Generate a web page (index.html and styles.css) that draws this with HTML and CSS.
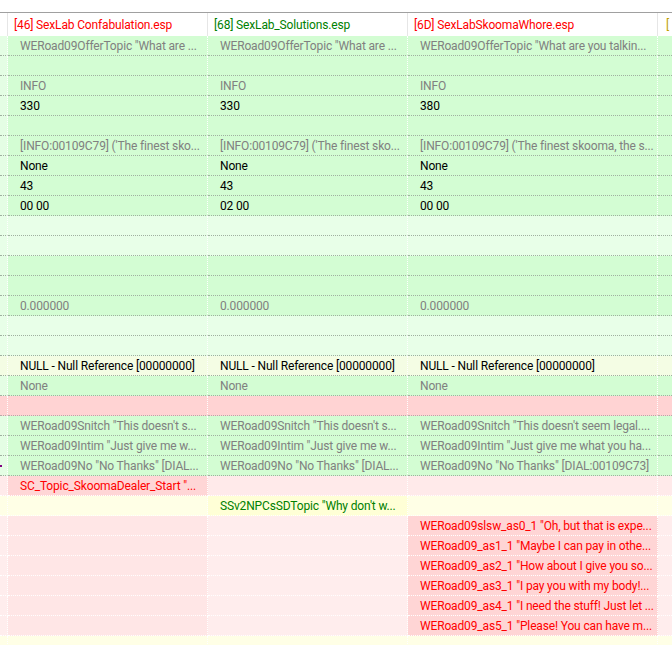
FILE: index.html
```html
<!DOCTYPE html>
<html>
  <head>
    <title>Record Compare</title>
    <link rel="stylesheet" href="styles.css">
  </head>
  <body>
    <div class="view">
      <div class="head">
        <div class="cell strip"></div>
        <div class="cell red">[46] SexLab Confabulation.esp</div>
        <div class="cell green">[68] SexLab_Solutions.esp</div>
        <div class="cell red">[6D] SexLabSkoomaWhore.esp</div>
        <div class="cell olive">[</div>
      </div>

      <div class="row g">
        <div class="cell strip"></div>
        <div class="cell dim">WERoad09OfferTopic "What are ...</div>
        <div class="cell dim">WERoad09OfferTopic "What are ...</div>
        <div class="cell dim">WERoad09OfferTopic "What are you talkin...</div>
        <div class="cell"></div>
      </div>
      <div class="row g">
        <div class="cell strip"></div><div class="cell"></div><div class="cell"></div><div class="cell"></div><div class="cell"></div>
      </div>
      <div class="row g">
        <div class="cell strip"></div>
        <div class="cell dim">INFO</div>
        <div class="cell dim">INFO</div>
        <div class="cell dim">INFO</div>
        <div class="cell"></div>
      </div>
      <div class="row g">
        <div class="cell strip"></div>
        <div class="cell">330</div>
        <div class="cell">330</div>
        <div class="cell">380</div>
        <div class="cell"></div>
      </div>
      <div class="row g">
        <div class="cell strip"></div><div class="cell"></div><div class="cell"></div><div class="cell"></div><div class="cell"></div>
      </div>
      <div class="row g">
        <div class="cell strip"></div>
        <div class="cell dim">[INFO:00109C79] ('The finest sko...</div>
        <div class="cell dim">[INFO:00109C79] ('The finest sko...</div>
        <div class="cell dim">[INFO:00109C79] ('The finest skooma, the s...</div>
        <div class="cell"></div>
      </div>
      <div class="row g">
        <div class="cell strip"></div>
        <div class="cell">None</div>
        <div class="cell">None</div>
        <div class="cell">None</div>
        <div class="cell"></div>
      </div>
      <div class="row g">
        <div class="cell strip"></div>
        <div class="cell">43</div>
        <div class="cell">43</div>
        <div class="cell">43</div>
        <div class="cell"></div>
      </div>
      <div class="row g">
        <div class="cell strip"></div>
        <div class="cell">00 00</div>
        <div class="cell">02 00</div>
        <div class="cell">00 00</div>
        <div class="cell"></div>
      </div>
      <div class="row lg">
        <div class="cell strip"></div><div class="cell"></div><div class="cell"></div><div class="cell"></div><div class="cell"></div>
      </div>
      <div class="row lg">
        <div class="cell strip"></div><div class="cell"></div><div class="cell"></div><div class="cell"></div><div class="cell"></div>
      </div>
      <div class="row g">
        <div class="cell strip"></div><div class="cell"></div><div class="cell"></div><div class="cell"></div><div class="cell"></div>
      </div>
      <div class="row g">
        <div class="cell strip"></div><div class="cell"></div><div class="cell"></div><div class="cell"></div><div class="cell"></div>
      </div>
      <div class="row g">
        <div class="cell strip"></div>
        <div class="cell dim">0.000000</div>
        <div class="cell dim">0.000000</div>
        <div class="cell dim">0.000000</div>
        <div class="cell"></div>
      </div>
      <div class="row lg">
        <div class="cell strip"></div><div class="cell"></div><div class="cell"></div><div class="cell"></div><div class="cell"></div>
      </div>
      <div class="row lg">
        <div class="cell strip"></div><div class="cell"></div><div class="cell"></div><div class="cell"></div><div class="cell"></div>
      </div>
      <div class="row ly">
        <div class="cell strip"></div>
        <div class="cell">NULL - Null Reference [00000000]</div>
        <div class="cell">NULL - Null Reference [00000000]</div>
        <div class="cell">NULL - Null Reference [00000000]</div>
        <div class="cell"></div>
      </div>
      <div class="row g">
        <div class="cell strip"></div>
        <div class="cell dim">None</div>
        <div class="cell dim">None</div>
        <div class="cell dim">None</div>
        <div class="cell"></div>
      </div>
      <div class="row p">
        <div class="cell strip"></div><div class="cell"></div><div class="cell"></div><div class="cell"></div><div class="cell"></div>
      </div>
      <div class="row g">
        <div class="cell strip"></div>
        <div class="cell dim">WERoad09Snitch "This doesn't s...</div>
        <div class="cell dim">WERoad09Snitch "This doesn't s...</div>
        <div class="cell dim">WERoad09Snitch "This doesn't seem legal....</div>
        <div class="cell"></div>
      </div>
      <div class="row g">
        <div class="cell strip"></div>
        <div class="cell dim">WERoad09Intim "Just give me w...</div>
        <div class="cell dim">WERoad09Intim "Just give me w...</div>
        <div class="cell dim">WERoad09Intim "Just give me what you ha...</div>
        <div class="cell"></div>
      </div>
      <div class="row g">
        <div class="cell strip"><span class="mark"></span></div>
        <div class="cell dim">WERoad09No "No Thanks" [DIAL...</div>
        <div class="cell dim">WERoad09No "No Thanks" [DIAL...</div>
        <div class="cell dim">WERoad09No "No Thanks" [DIAL:00109C73]</div>
        <div class="cell"></div>
      </div>
      <div class="row lp">
        <div class="cell strip"></div>
        <div class="cell red hot">SC_Topic_SkoomaDealer_Start "...</div>
        <div class="cell"></div>
        <div class="cell"></div>
        <div class="cell"></div>
      </div>
      <div class="row ly2">
        <div class="cell strip"></div>
        <div class="cell"></div>
        <div class="cell green mid">SSv2NPCsSDTopic "Why don't w...</div>
        <div class="cell"></div>
        <div class="cell"></div>
      </div>
      <div class="row pk">
        <div class="cell strip"></div><div class="cell a"></div><div class="cell"></div>
        <div class="cell red hot">WERoad09slsw_as0_1 "Oh, but that is expe...</div>
        <div class="cell"></div>
      </div>
      <div class="row pk">
        <div class="cell strip"></div><div class="cell a"></div><div class="cell"></div>
        <div class="cell red hot">WERoad09_as1_1 "Maybe I can pay in othe...</div>
        <div class="cell"></div>
      </div>
      <div class="row pk">
        <div class="cell strip"></div><div class="cell a"></div><div class="cell"></div>
        <div class="cell red hot">WERoad09_as2_1 "How about I give you so...</div>
        <div class="cell"></div>
      </div>
      <div class="row pk">
        <div class="cell strip"></div><div class="cell a"></div><div class="cell"></div>
        <div class="cell red hot">WERoad09_as3_1 "I pay you with my body!...</div>
        <div class="cell"></div>
      </div>
      <div class="row pk">
        <div class="cell strip"></div><div class="cell a"></div><div class="cell"></div>
        <div class="cell red hot">WERoad09_as4_1 "I need the stuff! Just let ...</div>
        <div class="cell"></div>
      </div>
      <div class="row pk">
        <div class="cell strip"></div><div class="cell a"></div><div class="cell"></div>
        <div class="cell red hot">WERoad09_as5_1 "Please! You can have m...</div>
        <div class="cell"></div>
      </div>
      <div class="row ly3">
        <div class="cell strip"></div><div class="cell"></div><div class="cell"></div><div class="cell"></div><div class="cell"></div>
      </div>
    </div>
  </body>
</html>
```

FILE: styles.css
```css
body {
  margin: 0;
  font-family: Roboto, "Noto Sans", sans-serif;
  font-size: 12px;
  letter-spacing: -0.15px;
  color: #000;
  background: #fff;
  overflow: hidden;
}
.view {
  padding-top: 12px;
}
.head,
.row {
  display: grid;
  grid-template-columns: 8px 200px 200px 250px 1fr;
}
.cell {
  box-sizing: border-box;
  padding-left: 12px;
  padding-right: 2px;
  white-space: nowrap;
  overflow: hidden;
  text-overflow: ellipsis;
  border-right: 1px dotted #fff;
  border-bottom: 1px dotted #a0b0a0;
  height: 20px;
  line-height: 21px;
}
.cell:last-child {
  border-right: none;
}
.cell.strip {
  padding: 0;
  position: relative;
}

/* header */
.head {
  border-top: 1px solid #a0a0a0;
  background: #fff;
}
.head .cell {
  height: 23px;
  line-height: 24px;
  padding-left: 6px;
  border-bottom: none;
  border-right: 1px solid #e6e6e6;
}
.head .cell:last-child {
  padding-left: 8px;
  border-right: none;
}

/* text colours */
.dim {
  color: #808080;
}
.red {
  color: #ff0000;
}
.green {
  color: #008000;
}
.olive {
  color: #c0a000;
}

/* row colours */
.row.g .cell {
  background: #d3fdd3;
}
.row.g .strip {
  background: #e4fee4;
}
.row.lg .cell {
  background: #e8ffe8;
}
.row.ly .cell {
  background: #f4fde4;
}
.row.p .cell {
  background: #ffd3d3;
  border-bottom-color: #b8a8a8;
}
.row.lp .cell {
  background: #ffeaea;
  border-bottom-color: #fff;
}
.row.lp .cell.hot {
  background: #ffd6d6;
}
.row.ly2 .cell {
  background: #ffffe6;
  border-bottom-color: #fff;
}
.row.ly2 .cell.mid {
  background: #ffffd6;
}
.row.pk .cell {
  background: #ffeded;
  border-bottom-color: #fff;
}
.row.pk .cell.a {
  background: #ffe6e6;
}
.row.pk .cell.hot {
  background: #ffd5d5;
}
.row.ly3 .cell {
  background: #ffffe6;
  border-bottom: none;
}
.mark {
  position: absolute;
  left: 0;
  top: 9px;
  width: 2px;
  height: 2px;
  background: #800080;
}
```
